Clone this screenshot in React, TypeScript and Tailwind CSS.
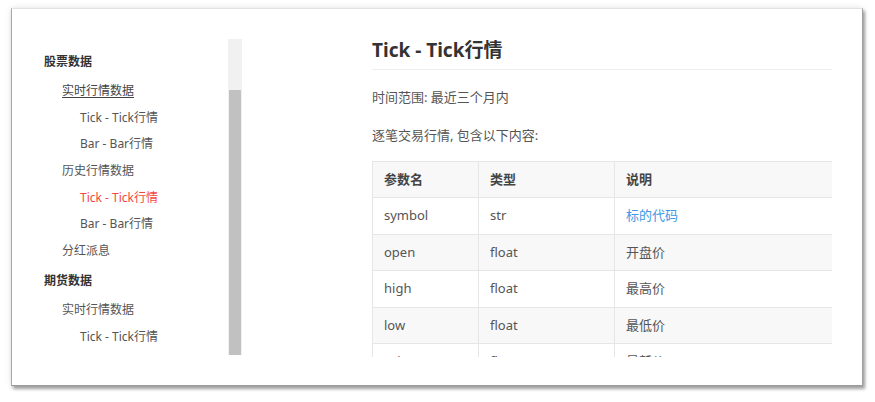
const nav: { label: string; level: 0 | 1 | 2; active?: boolean; hover?: boolean }[] = [
  { label: "股票数据", level: 0 },
  { label: "实时行情数据", level: 1, hover: true },
  { label: "Tick - Tick行情", level: 2 },
  { label: "Bar - Bar行情", level: 2 },
  { label: "历史行情数据", level: 1 },
  { label: "Tick - Tick行情", level: 2, active: true },
  { label: "Bar - Bar行情", level: 2 },
  { label: "分红派息", level: 1 },
  { label: "期货数据", level: 0 },
  { label: "实时行情数据", level: 1 },
  { label: "Tick - Tick行情", level: 2 },
  { label: "Bar - Bar行情", level: 2 },
  { label: "历史行情数据", level: 1 },
];

const rows = [
  { name: "symbol", type: "str", desc: "标的代码", link: true },
  { name: "open", type: "float", desc: "开盘价" },
  { name: "high", type: "float", desc: "最高价" },
  { name: "low", type: "float", desc: "最低价" },
  { name: "price", type: "float", desc: "最新价" },
  { name: "volume", type: "int", desc: "成交量" },
];

export default function App() {
  return (
    <div
      className="w-[875px] h-[402px] bg-white overflow-hidden pt-[8px] pl-[11px]"
      style={{ fontFamily: '"Noto Sans", "Noto Sans CJK SC", sans-serif' }}
    >
      <div className="w-[852px] h-[378px] bg-white border border-t-[#e2e2e2] border-l-[#a8a8a8] border-r-[#a0a0a0] border-b-[#9a9a9a] shadow-[2px_3px_3px_rgba(0,0,0,0.35),0_0_6px_rgba(0,0,0,0.12)] flex">
        {/* Sidebar */}
        <aside className="mt-[30px] h-[317px] w-[230px] flex shrink-0">
          <ul className="flex-1 overflow-hidden pt-[7px] text-[12px] text-[#555]">
            {nav.map((item, i) => (
              <li
                key={i}
                className={
                  item.level === 0
                    ? "h-[32px] leading-[32px] pl-[32px] font-bold text-[#333]"
                    : item.level === 1
                      ? "h-[26.7px] leading-[26.7px] pl-[50px]"
                      : "h-[26.7px] leading-[26.7px] pl-[68px]"
                }
              >
                <span
                  className={
                    item.active
                      ? "text-[#f5483d]"
                      : item.hover
                        ? "underline underline-offset-2 text-[#444]"
                        : ""
                  }
                >
                  {item.label}
                </span>
              </li>
            ))}
          </ul>
          <div className="w-[14px] h-[316px] bg-[#f1f1f1] flex flex-col pt-[51px] px-px">
            <div className="flex-1 bg-[#c1c1c1]" />
          </div>
        </aside>

        {/* Main content */}
        <main className="ml-[130px] w-[460px] h-[348px] overflow-hidden pt-[28px] text-[13px] text-[#555]">
          <h1 className="text-[19px] font-bold text-[#333] leading-[26px] pb-[6px] border-b border-[#eee]">
            Tick - Tick行情
          </h1>
          <p className="mt-[17px] leading-[20px]">时间范围: 最近三个月内</p>
          <p className="mt-[18px] leading-[20px]">逐笔交易行情, 包含以下内容:</p>
          <div className="mt-[16px] w-[470px] border-l border-t border-[#e6e6e6]">
            <div className="grid grid-cols-[106px_136px_228px] h-[36.4px] bg-[#f8f8f8] border-b border-[#e6e6e6] font-bold text-[#444]">
              <div className="px-[11px] flex items-center border-r border-[#e6e6e6]">参数名</div>
              <div className="px-[11px] flex items-center border-r border-[#e6e6e6]">类型</div>
              <div className="px-[11px] flex items-center border-r border-[#e6e6e6]">说明</div>
            </div>
            {rows.map((r, i) => (
              <div
                key={r.name}
                className={`grid grid-cols-[106px_136px_228px] h-[36.4px] border-b border-[#e6e6e6] ${
                  i % 2 === 1 ? "bg-[#f8f8f8]" : "bg-white"
                }`}
              >
                <div className="px-[11px] flex items-center border-r border-[#e6e6e6]">{r.name}</div>
                <div className="px-[11px] flex items-center border-r border-[#e6e6e6]">{r.type}</div>
                <div
                  className={`px-[11px] flex items-center border-r border-[#e6e6e6] ${
                    r.link ? "text-[#3d98e6]" : ""
                  }`}
                >
                  {r.desc}
                </div>
              </div>
            ))}
          </div>
        </main>
      </div>
    </div>
  );
}
